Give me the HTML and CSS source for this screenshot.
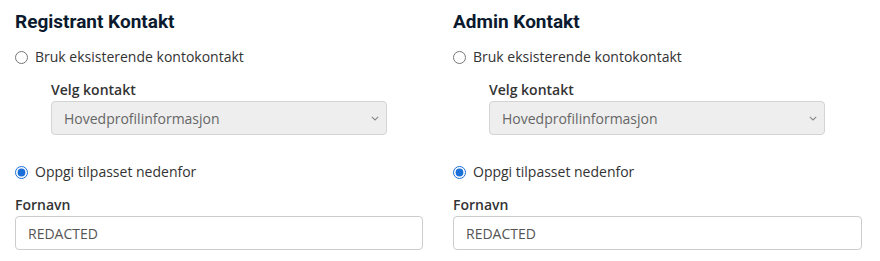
FILE: index.html
```html
<!DOCTYPE html>
<html lang="no">
<head>
    <meta charset="UTF-8">
    <meta name="viewport" content="width=device-width, initial-scale=1.0">
    <title>Kontakter</title>
    <link rel="stylesheet" href="styles.css">
</head>
<body>
    <div class="contacts">
        <div class="contact-col">
            <h3>Registrant Kontakt</h3>
            <label class="radio-row">
                <input type="radio" name="reg-mode">
                <span>Bruk eksisterende kontokontakt</span>
            </label>
            <div class="existing">
                <label class="field-label" for="regSelect">Velg kontakt</label>
                <select id="regSelect" disabled>
                    <option>Hovedprofilinformasjon</option>
                </select>
            </div>
            <label class="radio-row custom">
                <input type="radio" name="reg-mode" checked>
                <span>Oppgi tilpasset nedenfor</span>
            </label>
            <label class="field-label name-label" for="regName">Fornavn</label>
            <input type="text" id="regName" class="text-input" value="REDACTED">
        </div>
        <div class="contact-col">
            <h3>Admin Kontakt</h3>
            <label class="radio-row">
                <input type="radio" name="adm-mode">
                <span>Bruk eksisterende kontokontakt</span>
            </label>
            <div class="existing">
                <label class="field-label" for="admSelect">Velg kontakt</label>
                <select id="admSelect" disabled>
                    <option>Hovedprofilinformasjon</option>
                </select>
            </div>
            <label class="radio-row custom">
                <input type="radio" name="adm-mode" checked>
                <span>Oppgi tilpasset nedenfor</span>
            </label>
            <label class="field-label name-label" for="admName">Fornavn</label>
            <input type="text" id="admName" class="text-input" value="REDACTED">
        </div>
    </div>
</body>
</html>
```

FILE: styles.css
```css
body {
    margin: 0;
    background-color: #fff;
    font-family: "Open Sans", sans-serif;
    font-size: 14px;
    color: #333;
}

.contacts {
    display: grid;
    grid-template-columns: 408px 409px;
    column-gap: 30px;
    padding: 0 15px;
}

.contact-col {
    display: flex;
    flex-direction: column;
    align-items: flex-start;
}

h3 {
    font-family: Roboto, sans-serif;
    font-size: 19px;
    font-weight: 700;
    color: #0b1a2e;
    margin: 10px 0 0;
    line-height: 24px;
}

.radio-row {
    display: flex;
    align-items: center;
    gap: 7px;
    margin-top: 13px;
    line-height: 20px;
}

.radio-row input {
    margin: 0;
    width: 13px;
    height: 13px;
    accent-color: #1a6fd9;
}

.radio-row.custom {
    margin-top: 27px;
}

.existing {
    display: flex;
    flex-direction: column;
    align-items: flex-start;
    margin: 13px 0 0 36px;
}

.field-label {
    font-weight: 600;
    line-height: 20px;
    color: #333;
}

.existing select {
    appearance: none;
    margin-top: 1px;
    width: 336px;
    height: 34px;
    padding: 0 30px 0 12px;
    font-family: "Open Sans", sans-serif;
    font-size: 14px;
    color: #666;
    background-color: #eee;
    background-image: url("data:image/svg+xml,%3Csvg xmlns='http://www.w3.org/2000/svg' width='8' height='5' viewBox='0 0 8 5'%3E%3Cpath d='M0.8 0.8l3.2 3.2 3.2-3.2' fill='none' stroke='%23888' stroke-width='1.1'/%3E%3C/svg%3E");
    background-repeat: no-repeat;
    background-position: right 7px center;
    border: 1px solid #d4d4d4;
    border-radius: 4px;
    opacity: 1;
}

.name-label {
    margin-top: 13px;
}

.text-input {
    margin-top: 1px;
    box-sizing: border-box;
    width: 100%;
    height: 34px;
    padding: 0 12px;
    font-family: "Open Sans", sans-serif;
    font-size: 14px;
    color: #555;
    border: 1px solid #ccc;
    border-radius: 4px;
}
```
